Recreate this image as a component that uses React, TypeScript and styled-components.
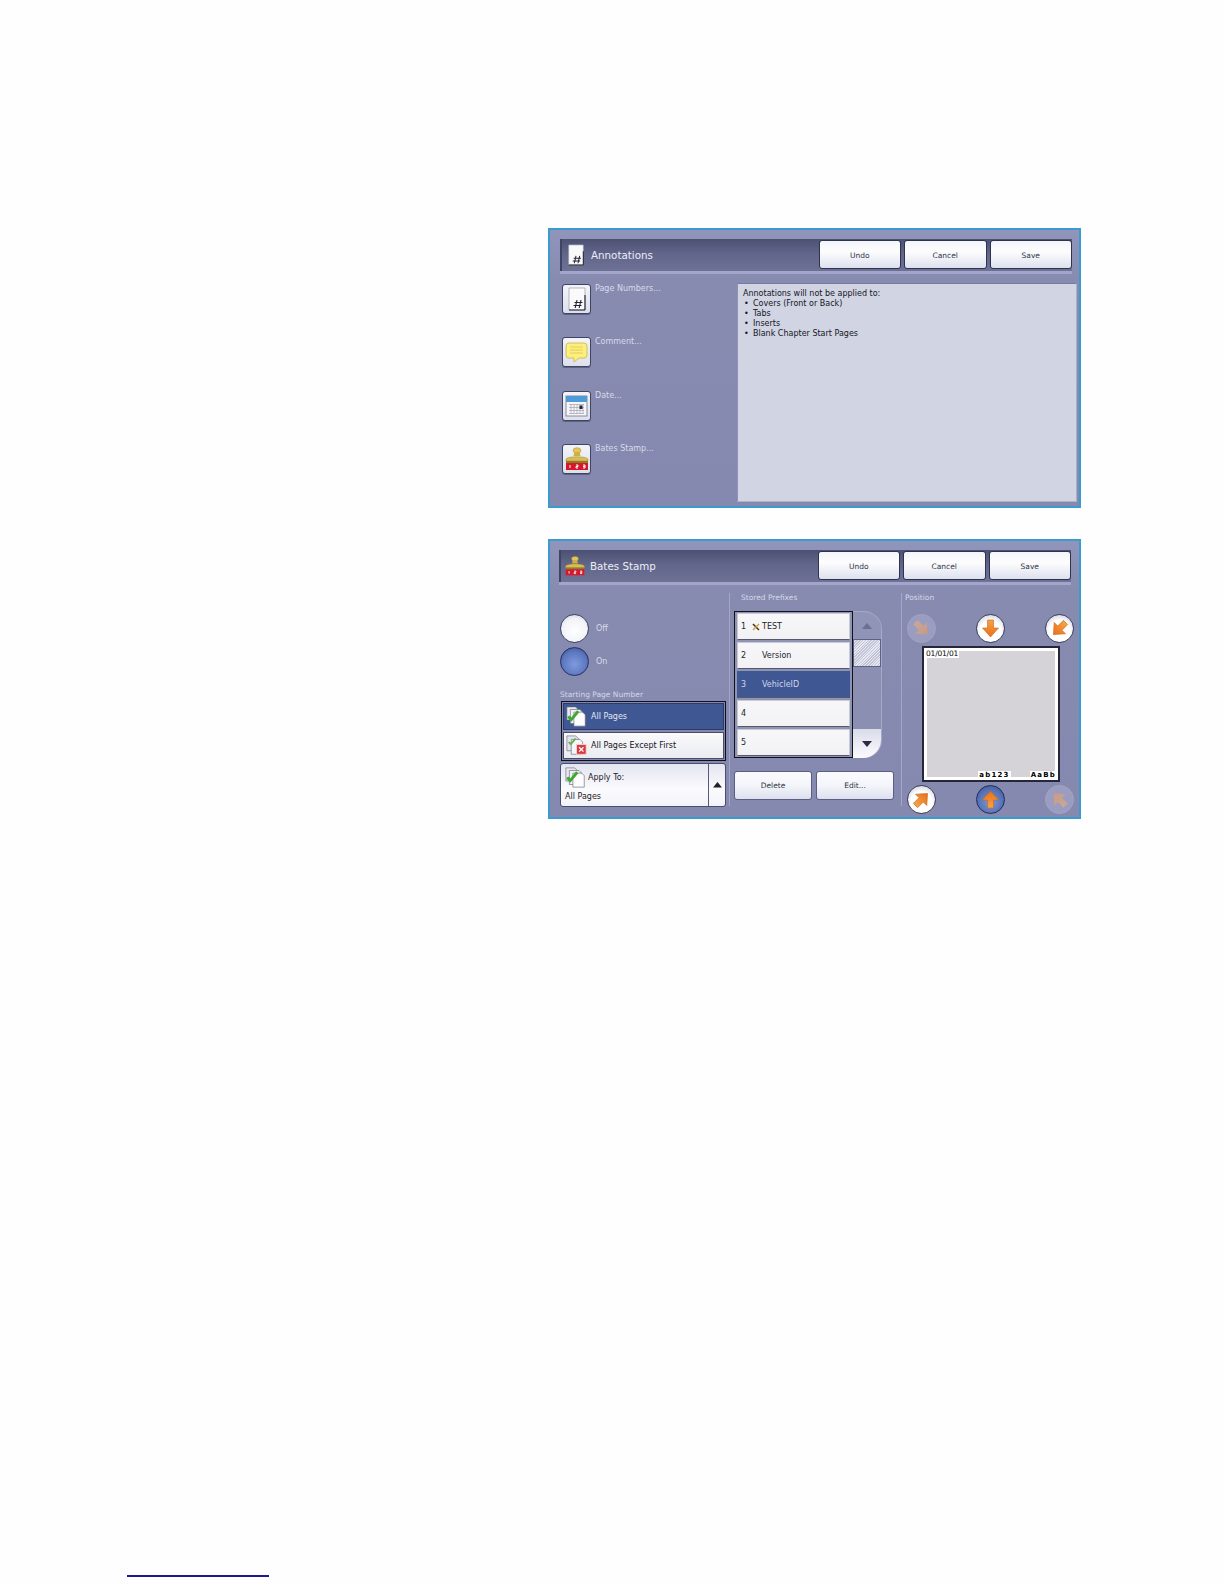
import React from "react";
import styled, { createGlobalStyle } from "styled-components";

const Global = createGlobalStyle`
  html, body { margin: 0; padding: 0; background: #fefefe; }
  body { font-family: "DejaVu Sans", "Liberation Sans", sans-serif; }
  * { box-sizing: border-box; }
`;

const Page = styled.div`
  width: 1224px;
  height: 1584px;
  padding: 228px 0 0 127px;
  overflow: hidden;
  display: flex;
  flex-direction: column;
  align-items: flex-start;
`;

const Panel = styled.section<{ $h: number }>`
  width: 533px;
  height: ${(p) => p.$h}px;
  margin-left: 421px;
  margin-bottom: 31px;
  border: 2px solid #3b9bcf;
  background: linear-gradient(180deg, #9295bb 0%, #878bb0 18%, #8589af 100%);
  display: flex;
  flex-direction: column;
`;

const HeaderBar = styled.header<{ $top: number; $left: number; $right: number }>`
  margin: ${(p) => p.$top}px ${(p) => p.$right}px 0 ${(p) => p.$left}px;
  height: 32px;
  display: flex;
  align-items: flex-start;
  gap: 3px;
  padding: 1px 0 0 0;
  background: linear-gradient(180deg, #4c5071 0%, #61658a 45%, #6e7295 100%);
  border-left: 2px solid #3f4464;
  box-shadow: 0 3px 0 #a3a6ca;
`;

const HeaderTitle = styled.div`
  flex: 1;
  height: 29px;
  display: flex;
  align-items: center;
  padding: 1px 0 0 3px;
  gap: 4px;
  color: #eceef6;
  font-size: 10.3px;
`;

const TopButton = styled.button`
  width: 82.5px;
  height: 29px;
  padding: 2px 0 0 0;
  border: 1px solid #2e3350;
  border-radius: 3px;
  background: linear-gradient(180deg, #f4f5fa 0%, #fdfdfe 40%, #dde1ee 100%);
  color: #30344a;
  font-family: inherit;
  font-size: 7.5px;
`;

const AnnotBody = styled.div`
  flex: 1;
  display: flex;
  margin-top: 12px;
  padding: 0 2px 4px 12px;
`;

const FeatureColumn = styled.div`
  width: 175px;
  padding-top: 1px;
  display: flex;
  flex-direction: column;
`;

const FeatureRow = styled.div`
  height: 53.3px;
  display: flex;
  align-items: flex-start;
  gap: 4px;
`;

const IconButton = styled.div`
  width: 29px;
  height: 30px;
  border: 1px solid #3f4460;
  border-radius: 3px;
  background: linear-gradient(180deg, #f3f4f9, #dde0ec);
  box-shadow: 0 1px 0 #5d6184;
  display: flex;
  align-items: center;
  justify-content: center;
`;

const FeatureLabel = styled.span`
  font-size: 8px;
  line-height: 10px;
  color: #d8dbe9;
`;

const InfoBox = styled.div`
  flex: 1;
  padding: 5px 5px;
  background: #d1d4e3;
  border: 1px solid #aeb1cd;
  border-top-color: #777ba0;
  border-left-color: #9093b6;
  font-size: 8px;
  line-height: 10px;
  color: #15161d;
`;

const BulletList = styled.ul`
  margin: 0;
  padding: 0;
  list-style: none;
`;

const Bullet = styled.li`
  display: flex;
  &::before {
    content: "•";
    width: 9px;
    padding-left: 1px;
  }
`;

const StampBody = styled.div`
  flex: 1;
  display: flex;
  align-items: flex-start;
`;

const OptionsColumn = styled.div`
  width: 179px;
  padding: 32px 3px 0 10px;
  display: flex;
  flex-direction: column;
`;

const RadioRow = styled.div`
  height: 29px;
  margin-bottom: 4px;
  display: flex;
  align-items: center;
  gap: 7px;
  font-size: 8px;
  color: #d8dbe9;
`;

const Radio = styled.div<{ $on?: boolean }>`
  width: 29px;
  height: 29px;
  border-radius: 50%;
  border: 1.5px solid ${(p) => (p.$on ? "#232f63" : "#3c4160")};
  background: ${(p) =>
    p.$on
      ? "radial-gradient(circle at 50% 60%, #7f9ade 0%, #5b76bd 60%, #33488a 100%)"
      : "radial-gradient(circle at 50% 60%, #ffffff 0%, #f2f3f8 60%, #b9bcd2 100%)"};
`;

const SmallHeading = styled.div<{ $indent?: number; $top?: number }>`
  height: 10px;
  margin-top: ${(p) => p.$top ?? 0}px;
  margin-left: ${(p) => p.$indent ?? 0}px;
  font-size: 7.5px;
  line-height: 10px;
  color: #d5d8e8;
`;

const SegmentBox = styled.div`
  margin: 1px 0 2px 1px;
  height: 60px;
  padding: 1px 1px;
  border: 1px solid #0e0f18;
  display: flex;
  flex-direction: column;
  gap: 2px;
  background: #8488ae;
`;

const SegmentItem = styled.div<{ $active?: boolean }>`
  flex: 1;
  display: flex;
  align-items: center;
  gap: 4px;
  padding-left: 2px;
  font-size: 8px;
  color: ${(p) => (p.$active ? "#e4e8f5" : "#14151c")};
  border: 1px solid ${(p) => (p.$active ? "#2a3a6c" : "#4a4d63")};
  background: ${(p) => (p.$active ? "#3f5792" : "linear-gradient(180deg,#fafafc,#eaebf0)")};
`;

const ApplySelect = styled.div`
  height: 44px;
  display: flex;
  border: 1px solid #4a4e6e;
  border-radius: 3px;
  background: linear-gradient(180deg, #e3e5f0 0%, #fbfbfe 60%, #f2f3f8 100%);
  font-size: 8px;
  color: #1f2029;
`;

const ApplyMain = styled.div`
  flex: 1;
  padding: 3px 0 0 4px;
  display: flex;
  flex-direction: column;
  gap: 4px;
`;

const ApplyTop = styled.div`
  display: flex;
  align-items: center;
  gap: 2px;
`;

const ApplyArrow = styled.div`
  width: 17px;
  border-left: 1px solid #55597a;
  display: flex;
  align-items: center;
  justify-content: center;
`;

const Divided = styled.div<{ $w: number }>`
  width: ${(p) => p.$w}px;
  height: 213px;
  margin-top: 11px;
  padding-left: 4px;
  border-left: 1px solid #a3a6c8;
`;

const PrefixRow = styled.div`
  display: flex;
  height: 147px;
  margin-top: 8px;
`;

const PrefixList = styled.div`
  width: 119px;
  padding: 1px 2px;
  border: 1px solid #10111a;
  display: flex;
  flex-direction: column;
  gap: 2px;
  background: #8f93b4;
`;

const PrefixItem = styled.div<{ $active?: boolean }>`
  flex: 1;
  display: flex;
  align-items: center;
  padding-left: 3px;
  font-size: 8px;
  color: ${(p) => (p.$active ? "#cfd6ee" : "#23242c")};
  border: 1px solid ${(p) => (p.$active ? "#3f5792" : "#c9cad2")};
  border-bottom-color: #55576a;
  background: ${(p) => (p.$active ? "#3f5792" : "linear-gradient(180deg,#f7f7f9,#f2f2f5)")};
`;

const PrefixNo = styled.span`
  width: 11px;
`;

const PrefixMark = styled.span`
  width: 10px;
  display: flex;
`;

const PrefixText = styled.span`
  color: inherit;
`;

const ScrollTrack = styled.div`
  width: 29px;
  display: flex;
  flex-direction: column;
  background: #8b8fb2;
  border-radius: 0 18px 18px 0;
  border-right: 1px solid #a5a8c6;
`;

const ScrollUp = styled.div`
  height: 28px;
  display: flex;
  align-items: center;
  justify-content: center;
  border-radius: 0 18px 0 0;
  background: #9094b7;
  border-top: 1px solid #a5a8c6;
`;

const ScrollThumb = styled.div`
  height: 28px;
  border: 1px solid #5d6184;
  background: repeating-linear-gradient(135deg, #c3c5d6 0 1px, #e6e8f1 1px 2px);
`;

const ScrollSpace = styled.div`
  flex: 1;
`;

const ScrollDown = styled.div`
  height: 29px;
  display: flex;
  align-items: center;
  justify-content: center;
  border-radius: 0 0 18px 0;
  background: linear-gradient(180deg, #d9dbe9, #fcfcfe);
`;

const ActionRow = styled.div`
  display: flex;
  gap: 4px;
  margin-top: 13px;
`;

const ActionButton = styled.button`
  width: 78px;
  height: 29px;
  padding: 0;
  border: 1px solid #5a5e80;
  border-radius: 3px;
  background: linear-gradient(180deg, #fbfbfe 0%, #f4f5fa 50%, #dde0ee 100%);
  font-family: inherit;
  font-size: 7.5px;
  color: #2d3040;
`;

const CircleRow = styled.div<{ $top: number }>`
  width: 167px;
  margin-top: ${(p) => p.$top}px;
  margin-left: 1px;
  display: flex;
  justify-content: space-between;
`;

const Circle = styled.div<{ $kind: "on" | "off" | "disabled" }>`
  width: 29px;
  height: 29px;
  border-radius: 50%;
  display: flex;
  align-items: center;
  justify-content: center;
  border: 1.5px solid
    ${(p) => (p.$kind === "disabled" ? "#a0a3c4" : p.$kind === "on" ? "#1f2c5e" : "#3a3e5a")};
  background: ${(p) =>
    p.$kind === "on"
      ? "radial-gradient(circle at 50% 60%, #7f9ade, #3f5b9a 90%)"
      : p.$kind === "off"
        ? "radial-gradient(circle at 50% 60%, #ffffff 50%, #b9bcd0 100%)"
        : "#9a9dbf"};
`;

const Preview = styled.div`
  width: 138px;
  height: 136px;
  margin: 3px 0 3px 16px;
  border: 2px solid #25263a;
  background: #d5d3d7;
  box-shadow: inset 0 0 0 3px #fff;
  padding: 2px 1px 1px 1px;
  display: flex;
  flex-direction: column;
  justify-content: space-between;
  color: #000;
  font-size: 7.5px;
  line-height: 8px;
`;

const StampText = styled.span<{ $wide?: boolean }>`
  background: #fff;
  padding: 0 1px;
  font-size: ${(p) => (p.$wide ? 7 : 7.5)}px;
  font-weight: ${(p) => (p.$wide ? 700 : 400)};
  letter-spacing: ${(p) => (p.$wide ? 1.2 : -0.2)}px;
`;

const PreviewTop = styled.div`
  display: flex;
`;

const PreviewBottom = styled.div`
  display: flex;
  justify-content: flex-end;
  gap: 19px;
`;

const FooterRule = styled.div`
  width: 142px;
  height: 2px;
  margin-top: 725px;
  background: #1c1a8e;
`;

const HashIcon = ({ s = 24 }: { s?: number }) => (
  <svg width={s} height={s} viewBox="0 0 24 24">
    <path d="M4 1h16v22H4z" fill="#fafafa" stroke="#9a9cb0" strokeWidth="0.7" />
    <path d="M4 23h16M20 8v15" stroke="#202230" strokeWidth="1.1" />
    <path d="M12 13l-1.800 8M16 13l-1.800 8M9.500 15.500h8M8.500 18.500h8" stroke="#202230" strokeWidth="1.1" fill="none" />
  </svg>
);

const BubbleIcon = () => (
  <svg width="25" height="24" viewBox="0 0 25 24">
    <path d="M5 3h15a3 3 0 0 1 3 3v9a3 3 0 0 1-3 3h-5l-5 4v-4H5a3 3 0 0 1-3-3V6a3 3 0 0 1 3-3z" fill="#fdee7e" stroke="#cdbb4e" strokeWidth="0.9" />
    <path d="M6 7h13M6 10h13M6 13h13" stroke="#dccb58" strokeWidth="0.9" />
  </svg>
);

const CalendarIcon = () => (
  <svg width="25" height="24" viewBox="0 0 25 24">
    <rect x="2" y="2" width="21" height="20" fill="#f6f6f8" stroke="#70748c" strokeWidth="0.8" />
    <rect x="2" y="2" width="21" height="6" fill="#4f9bd8" />
    <path d="M5 10.500h15M5 13.500h15M5 16.500h15M5 19.500h15M7 10v10M10 10v10M13 10v10M16 10v10M19 10v10" stroke="#a3a5b2" strokeWidth="0.7" />
    <rect x="15.500" y="11.500" width="3" height="3.500" fill="#25263a" />
  </svg>
);

const StampIcon = ({ s = 26 }: { s?: number }) => (
  <svg width={s} height={s} viewBox="0 0 26 26">
    <ellipse cx="13" cy="4.500" rx="4" ry="2.800" fill="#e2c65a" stroke="#a58c2f" strokeWidth="0.5" />
    <path d="M10.500 6h5l1 4h-7z" fill="#cdb044" />
    <path d="M2 13c2-3 20-3 22 0v2H2z" fill="#d9bd52" stroke="#a58c2f" strokeWidth="0.5" />
    <rect x="2" y="15" width="22" height="2" fill="#8f7a2a" />
    <rect x="2" y="17" width="22" height="7" fill="#d7172c" />
    <path d="M6 19v3M12 19h2v1.500h-2v1.500h2M19 19h2v3h-2M19 20.500h2" stroke="#fff" strokeWidth="1" fill="none" />
  </svg>
);

const PagesCheck = ({ s = 21 }: { s?: number }) => (
  <svg width={s} height={s} viewBox="0 0 24 24">
    <path d="M1 1h10l3 3v12H1z" fill="#e9eaee" stroke="#5f6172" strokeWidth="0.7" />
    <path d="M5 4h11l3 3v13H5z" fill="#f1f2f4" stroke="#5f6172" strokeWidth="0.7" />
    <path d="M9 7h10l3 3v13H9z" fill="#fdfdfd" stroke="#5f6172" strokeWidth="0.7" />
    <path d="M2.500 12l3.500 3.500L14 6" stroke="#3ea832" strokeWidth="3.2" fill="none" />
  </svg>
);

const PagesCross = () => (
  <svg width="21" height="21" viewBox="0 0 24 24">
    <path d="M1 1h10l3 3v14H1z" fill="#e4e5ea" stroke="#5f6172" strokeWidth="0.7" />
    <path d="M6 5h10l3 3v14H6z" fill="#f6f6f8" stroke="#5f6172" strokeWidth="0.7" />
    <path d="M3 8l2.500 2.500L11 4" stroke="#5fae4c" strokeWidth="2" fill="none" />
    <rect x="12" y="11" width="11" height="11" fill="#d8393e" stroke="#f3d2d2" strokeWidth="1" />
    <path d="M15 14l5 5M20 14l-5 5" stroke="#fff" strokeWidth="1.500" />
  </svg>
);

const Tri = ({ dir, color, w = 10 }: { dir: "up" | "down"; color: string; w?: number }) => (
  <svg width={w} height={w * 0.6} viewBox="0 0 10 6">
    <path d={dir === "up" ? "M5 0l5 6H0z" : "M0 0h10L5 6z"} fill={color} />
  </svg>
);

const Arrow = ({ angle, disabled }: { angle: number; disabled?: boolean }) => (
  <svg width="21" height="21" viewBox="0 0 21 21" style={{ transform: `rotate(${angle}deg)` }}>
    <defs>
      <linearGradient id={`ar${angle}`} x1="0" y1="0" x2="0" y2="1">
        <stop offset="0" stopColor={disabled ? "#c9a796" : "#f6a347"} />
        <stop offset="1" stopColor={disabled ? "#c89a86" : "#ea6f1a"} />
      </linearGradient>
    </defs>
    <path
      d="M7.500 2h6v8h5L10.500 19 2.500 10h5z"
      fill={`url(#ar${angle})`}
      stroke={disabled ? "none" : "#c9661a"}
      strokeWidth="0.6"
    />
  </svg>
);

const TopButtons = () => (
  <>
    <TopButton>Undo</TopButton>
    <TopButton>Cancel</TopButton>
    <TopButton>Save</TopButton>
  </>
);

export default function App() {
  return (
    <Page>
      <Global />
      <Panel $h={280}>
        <HeaderBar $top={9} $left={10} $right={7}>
          <HeaderTitle>
            <HashIcon s={22} />
            Annotations
          </HeaderTitle>
          <TopButtons />
        </HeaderBar>
        <AnnotBody>
          <FeatureColumn>
            <FeatureRow>
              <IconButton><HashIcon /></IconButton>
              <FeatureLabel>Page Numbers...</FeatureLabel>
            </FeatureRow>
            <FeatureRow>
              <IconButton><BubbleIcon /></IconButton>
              <FeatureLabel>Comment...</FeatureLabel>
            </FeatureRow>
            <FeatureRow>
              <IconButton><CalendarIcon /></IconButton>
              <FeatureLabel>Date...</FeatureLabel>
            </FeatureRow>
            <FeatureRow>
              <IconButton><StampIcon /></IconButton>
              <FeatureLabel>Bates Stamp...</FeatureLabel>
            </FeatureRow>
          </FeatureColumn>
          <InfoBox>
            Annotations will not be applied to:
            <BulletList>
              <Bullet>Covers (Front or Back)</Bullet>
              <Bullet>Tabs</Bullet>
              <Bullet>Inserts</Bullet>
              <Bullet>Blank Chapter Start Pages</Bullet>
            </BulletList>
          </InfoBox>
        </AnnotBody>
      </Panel>

      <Panel $h={280}>
        <HeaderBar $top={9} $left={9} $right={8}>
          <HeaderTitle>
            <StampIcon s={22} />
            Bates Stamp
          </HeaderTitle>
          <TopButtons />
        </HeaderBar>
        <StampBody>
          <OptionsColumn>
            <RadioRow><Radio />Off</RadioRow>
            <RadioRow><Radio $on />On</RadioRow>
            <SmallHeading $top={10}>Starting Page Number</SmallHeading>
            <SegmentBox>
              <SegmentItem $active><PagesCheck />All Pages</SegmentItem>
              <SegmentItem><PagesCross />All Pages Except First</SegmentItem>
            </SegmentBox>
            <ApplySelect>
              <ApplyMain>
                <ApplyTop><PagesCheck />Apply To:</ApplyTop>
                All Pages
              </ApplyMain>
              <ApplyArrow><Tri dir="up" color="#1f2029" w={9} /></ApplyArrow>
            </ApplySelect>
          </OptionsColumn>

          <Divided $w={172}>
            <SmallHeading $indent={7}>Stored Prefixes</SmallHeading>
            <PrefixRow>
              <PrefixList>
                <PrefixItem>
                  <PrefixNo>1</PrefixNo>
                  <PrefixMark>
                    <svg width="8" height="8" viewBox="0 0 8 8">
                      <path d="M1 1l6 6" stroke="#3a3320" strokeWidth="1.500" />
                      <path d="M7 1L1 7" stroke="#d2a23c" strokeWidth="1.500" />
                    </svg>
                  </PrefixMark>
                  <PrefixText>TEST</PrefixText>
                </PrefixItem>
                <PrefixItem>
                  <PrefixNo>2</PrefixNo>
                  <PrefixMark />
                  <PrefixText>Version</PrefixText>
                </PrefixItem>
                <PrefixItem $active>
                  <PrefixNo>3</PrefixNo>
                  <PrefixMark />
                  <PrefixText>VehicleID</PrefixText>
                </PrefixItem>
                <PrefixItem><PrefixNo>4</PrefixNo></PrefixItem>
                <PrefixItem><PrefixNo>5</PrefixNo></PrefixItem>
              </PrefixList>
              <ScrollTrack>
                <ScrollUp><Tri dir="up" color="#6d7094" /></ScrollUp>
                <ScrollThumb />
                <ScrollSpace />
                <ScrollDown><Tri dir="down" color="#2a2c40" /></ScrollDown>
              </ScrollTrack>
            </PrefixRow>
            <ActionRow>
              <ActionButton>Delete</ActionButton>
              <ActionButton>Edit...</ActionButton>
            </ActionRow>
          </Divided>

          <Divided $w={178}>
            <SmallHeading $indent={-1}>Position</SmallHeading>
            <CircleRow $top={11}>
              <Circle $kind="disabled"><Arrow angle={-45} disabled /></Circle>
              <Circle $kind="off"><Arrow angle={0} /></Circle>
              <Circle $kind="off"><Arrow angle={45} /></Circle>
            </CircleRow>
            <Preview>
              <PreviewTop><StampText>01/01/01</StampText></PreviewTop>
              <PreviewBottom>
                <StampText $wide>ab123</StampText>
                <StampText $wide>AaBb</StampText>
              </PreviewBottom>
            </Preview>
            <CircleRow $top={0}>
              <Circle $kind="off"><Arrow angle={225} /></Circle>
              <Circle $kind="on"><Arrow angle={180} /></Circle>
              <Circle $kind="disabled"><Arrow angle={135} disabled /></Circle>
            </CircleRow>
          </Divided>
        </StampBody>
      </Panel>
      <FooterRule />
    </Page>
  );
}
